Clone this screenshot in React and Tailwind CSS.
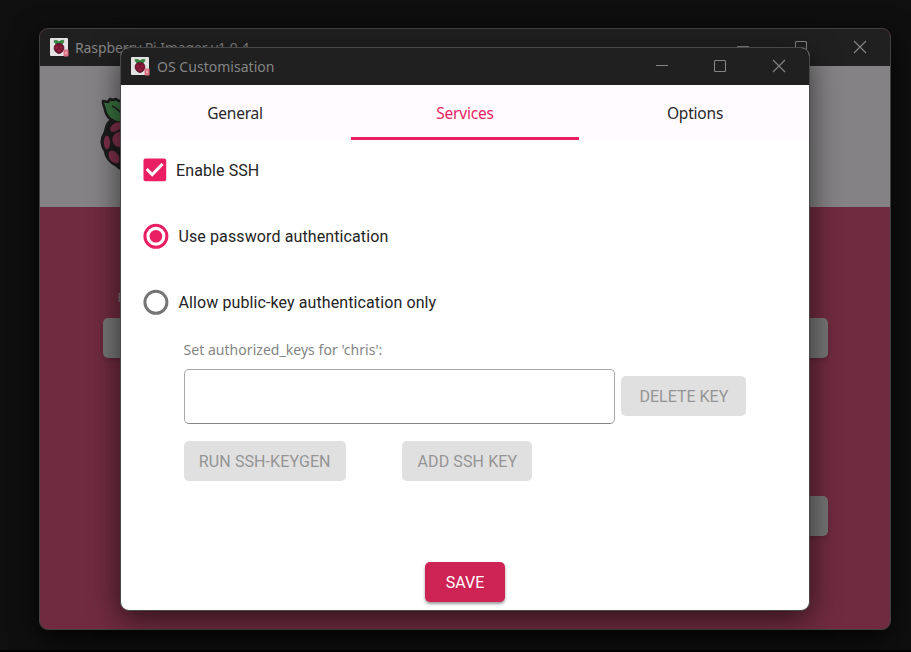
function BerryIcon() {
  return (
    <svg className="h-[19px] w-[19px] shrink-0" viewBox="0 0 19 19">
      <rect x="0" y="0" width="18" height="18" rx="1" fill="#e4e2e2" />
      <path d="M4 2.500c2-.5 3.800 0 5 1.300c1.200-1.300 3-1.800 5-1.300c0 2-1 3.200-2.600 3.800H6.600C5 5.700 4 4.500 4 2.500Z" fill="#2f8a3d" stroke="#2d5a35" strokeWidth="0.400" />
      <path d="M9 5.300c2.800 0 5 1.800 5 4.700s-2.400 5.200-5 5.700c-2.600-.5-5-2.800-5-5.700s2.200-4.700 5-4.700Z" fill="#741631" stroke="#4a1a2a" strokeWidth="0.600" />
      <circle cx="6.800" cy="9.500" r="1.400" fill="#94203f" />
      <circle cx="11.200" cy="9.500" r="1.400" fill="#94203f" />
      <circle cx="9" cy="12.500" r="1.500" fill="#94203f" />
      <rect x="13.500" y="11.500" width="5" height="7" rx="1" fill="#dc6f82" />
      <rect x="15.300" y="13.600" width="1.400" height="2.600" fill="#f0b8c2" />
    </svg>
  );
}

function Raspberry() {
  return (
    <svg className="ml-[59px] h-[78px] w-[64px]" viewBox="0 0 64 78" stroke="#1c1c1c" strokeWidth="2.500">
      <path d="M12 25C5 30 8 35 5 39c-4 6-2 13 1 17 1 8 6 12 12 15 4 4 9 5 14 6 5-1 10-2 14-6 6-3 11-7 12-15 3-4 5-11 1-17-3-4 0-9-7-14Z" fill="#1c1c1c" />
      <path d="M32 30C29 10 24 5 20 6l-3-2-3 1-3-1-2 3-5-1c-1 3 2 6 2 9 1 5 4 9 9 11 4 2 10 2 17 4Z" fill="#38703f" strokeLinejoin="round" />
      <path d="M32 30C35 10 40 5 44 6l3-2 3 1 3-1 2 3 5-1c1 3-2 6-2 9-1 5-4 9-9 11-4 2-10 2-17 4Z" fill="#38703f" strokeLinejoin="round" />
      <path d="M13 11c5 2 8 5 11 10M51 11c-5 2-8 5-11 10" fill="none" strokeWidth="1.500" />
      <g fill="#7d3049" strokeWidth="0.800">
        <ellipse cx="17" cy="32" rx="7" ry="4.200" transform="rotate(-35 17 32)" />
        <ellipse cx="8" cy="47.500" rx="3.500" ry="7.300" />
        <circle cx="21" cy="44.500" r="8" />
        <ellipse cx="15" cy="62" rx="5" ry="7.500" transform="rotate(-35 15 62)" />
        <circle cx="42.500" cy="44.500" r="8" />
        <circle cx="32" cy="60" r="7" />
      </g>
    </svg>
  );
}

function WindowControls() {
  return (
    <svg className="-mt-[2px] h-[14px] w-[132px]" viewBox="0 0 132 14" fill="none" stroke="#858585" strokeWidth="1.100">
      <path d="M1 6.500h12" />
      <rect x="59.500" y="1.500" width="11" height="11" rx="1" />
      <path d="M118 1l12 12M130 1l-12 12" />
    </svg>
  );
}

function GreyButton({ className, children }) {
  return (
    <button className={`h-10 shrink-0 rounded-[5px] bg-[#e0e0e0] text-center font-[Roboto,sans-serif] text-[16px] text-[#949494] ${className}`}>
      {children}
    </button>
  );
}

function Tab({ active, children }) {
  return (
    <div className={`flex h-[55px] flex-1 items-center justify-center border-b-[3px] pt-[5px] text-[15.5px] tracking-[-0.2px] ${active ? "border-[#e91e63] text-[#e91e63]" : "border-transparent text-[#29272a]"}`}>
      {children}
    </div>
  );
}

export default function App() {
  return (
    <div className="relative h-[652px] w-[911px] overflow-hidden border-b-2 border-black bg-[#0f0f0f] font-['Noto_Sans',sans-serif]">
      <section className="absolute left-[39px] top-[28px] flex h-[602px] w-[852px] flex-col overflow-hidden rounded-[9px] border border-[#414141] bg-[#702b40] shadow-[0_8px_28px_#000000cc]">
        <header className="flex h-[37px] shrink-0 items-center bg-[#202020] pl-[10px] pr-[22px]">
          <BerryIcon />
          <span className="ml-[6px] flex-1 text-[14px] tracking-[-0.1px] text-[#858585]">Raspberry Pi Imager v1.9.4</span>
          <WindowControls />
        </header>
        <div className="h-[141px] shrink-0 bg-[#848284] pt-[29px]"><Raspberry /></div>
        <div className="flex justify-between px-[62.5px] pt-[83px]">
          <div className="flex w-40 flex-col">
            <span className="h-7 pl-[15px] text-[12px] leading-[16px] text-[#858285]">R</span>
            <div className="h-10 rounded-[5px] bg-[#757575] shadow-md" />
          </div>
          <div className="mt-7 h-10 w-40 rounded-[5px] bg-[#757575] shadow-md" />
        </div>
        <div className="flex justify-end pr-[62.5px] pt-[138px]">
          <div className="h-10 w-40 rounded-[5px] bg-[#757575] shadow-md" />
        </div>
      </section>

      <section className="absolute left-[120px] top-[47px] flex h-[564px] w-[690px] flex-col overflow-hidden rounded-[9px] border border-[#484848] bg-white shadow-[0_8px_30px_#00000099]">
        <header className="flex h-[37px] shrink-0 items-center bg-[#202020] pl-[10px] pr-[22px]">
          <BerryIcon />
          <span className="ml-[7px] flex-1 text-[14px] tracking-[0.03px] text-[#858585]">OS Customisation</span>
          <WindowControls />
        </header>
        <nav className="flex shrink-0 gap-[2px] bg-[#fffbff]">
          <Tab>General</Tab>
          <Tab active>Services</Tab>
          <Tab>Options</Tab>
        </nav>
        <main className="flex flex-1 flex-col pl-[22px] font-[Roboto,sans-serif] text-[16px] text-[#242424]">
          <div className="mt-[18px] flex h-6 items-center">
            <svg className="h-6 w-6" viewBox="0 0 24 24">
              <rect x="0.500" y="0.500" width="22.700" height="22.700" rx="2" fill="#e91e63" />
              <path d="M3.700 11l5.500 5.500L19.500 6" fill="none" stroke="white" strokeWidth="3" />
            </svg>
            <span className="ml-[9px] pt-px tracking-[0.1px]">Enable SSH</span>
          </div>
          <div className="mt-[41px] flex h-[26px] items-center">
            <svg className="h-[26px] w-[26px]" viewBox="0 0 26 26">
              <circle cx="12.900" cy="13.300" r="11" fill="none" stroke="#e91e63" strokeWidth="3" />
              <circle cx="12.900" cy="13.300" r="6.300" fill="#e91e63" />
            </svg>
            <span className="ml-[9.500px] pt-[2px] tracking-[0.11px]">Use password authentication</span>
          </div>
          <div className="mt-10 flex h-[26px] items-center">
            <svg className="h-[26px] w-[26px]" viewBox="0 0 26 26">
              <circle cx="12.900" cy="13.300" r="11" fill="none" stroke="#757575" strokeWidth="3" />
            </svg>
            <span className="ml-[9.500px] pt-[2px] tracking-[0.1px]">Allow public-key authentication only</span>
          </div>
          <label className="ml-[40.500px] mt-[25px] h-[20px] font-['Noto_Sans',sans-serif] text-[14px] leading-[20px] tracking-[0.04px] text-[#858585]">
            Set authorized_keys for 'chris':
          </label>
          <div className="ml-[41px] mt-[9px] flex items-center">
            <div className="h-[55px] w-[431px] rounded-[5px] border border-[#a8a8a8] border-b-[#858585]" />
            <GreyButton className="-mt-px ml-[6.400px] w-[125px] pt-px">DELETE KEY</GreyButton>
          </div>
          <div className="ml-[40.500px] mt-[17.300px] flex">
            <GreyButton className="w-[162.500px] pt-px tracking-[0.1px]">RUN SSH-KEYGEN</GreyButton>
            <GreyButton className="ml-[56.400px] w-[130px] pt-px tracking-[0.1px]">ADD SSH KEY</GreyButton>
          </div>
          <button className="ml-[282px] mt-[81px] h-10 w-20 rounded-[5px] bg-[#cd2355] pt-px text-white shadow-[0_2px_3px_#00000066]">SAVE</button>
        </main>
      </section>
    </div>
  );
}
